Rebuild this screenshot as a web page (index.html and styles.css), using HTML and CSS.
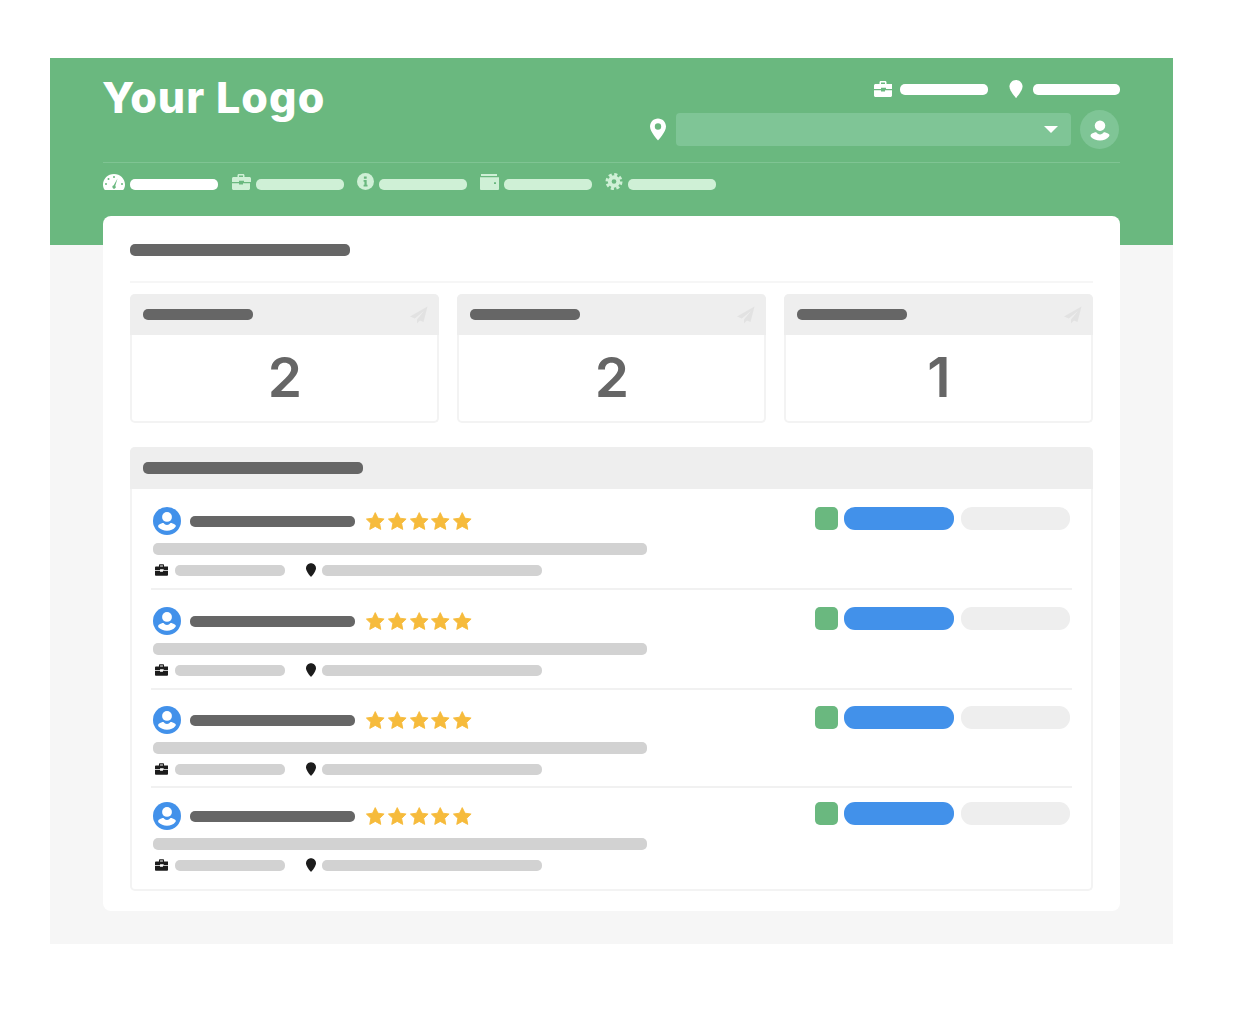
FILE: index.html
```html
<!DOCTYPE html>
<html lang="en">
<head>
    <meta charset="UTF-8">
    <meta name="viewport" content="width=device-width, initial-scale=1.0">
    <title>Your Logo</title>
    <link rel="stylesheet" href="styles.css">
</head>
<body>
    <svg class="icon-defs" aria-hidden="true">
        <symbol id="i-case" viewBox="0 0 18 16">
            <path fill-rule="evenodd" d="M5.5 3V1.4C5.5.6 6.1 0 6.9 0h4.2c.8 0 1.4.6 1.4 1.4V3h4.9c.9 0 1.6.7 1.6 1.5V8h-7V6.8H7V8H0V4.5C0 3.7.7 3 1.5 3zM7 1.6V3h4V1.6zM0 9.2h7v1.3h4V9.2h7v5.3c0 .8-.7 1.5-1.5 1.5h-15C.7 16 0 15.3 0 14.5z"/>
        </symbol>
        <symbol id="i-pin" viewBox="0 0 16 22">
            <path d="M8 0C3.6 0 0 3.6 0 8c0 5.5 8 14 8 14s8-8.5 8-14c0-4.4-3.6-8-8-8z"/>
        </symbol>
        <symbol id="i-pin-hole" viewBox="0 0 16 22">
            <path fill-rule="evenodd" d="M8 0C3.6 0 0 3.6 0 8c0 5.5 8 14 8 14s8-8.5 8-14c0-4.4-3.6-8-8-8zm0 4.8a3.2 3.2 0 1 1 0 6.4 3.2 3.2 0 0 1 0-6.4z"/>
        </symbol>
        <symbol id="i-user" viewBox="2 2 24 24">
            <circle cx="14" cy="10.5" r="4.2"/>
            <path d="M7 17.2c1.4-.9 2.9-1.4 4-1.4.8 1.1 1.8 1.7 3 1.7s2.200-.6 3-1.700c1.100 0 2.600.5 4 1.400.7.5.7 1.300.2 1.900C19.500 21.300 17 22.300 14 22.300s-5.500-1-7.200-2.700c-.5-.6-.5-1.900.2-2.400z"/>
        </symbol>
        <symbol id="i-plane" viewBox="0 0 18 18">
            <path d="M17.500.5 0 10.500l4.800 2L14 5l-7 8.500v4l3-3 3.500 1.500z"/>
        </symbol>
        <symbol id="i-star" viewBox="-1 -1 22 21">
            <path d="M10 .5l2.900 6 6.600.9-4.800 4.600 1.200 6.500-5.900-3.200L4.100 18.500l1.200-6.500L.5 7.400l6.600-.9z"/>
        </symbol>
    </svg>

    <div class="frame">
        <header class="top">
            <div class="top-row">
                <div class="logo">Your Logo</div>
                <div class="top-right">
                    <div class="links">
                        <svg class="ic-case"><use href="#i-case"/></svg>
                        <span class="bar bar-link"></span>
                        <svg class="ic-pin"><use href="#i-pin"/></svg>
                        <span class="bar bar-link"></span>
                    </div>
                    <div class="search">
                        <svg class="ic-search-pin"><use href="#i-pin-hole"/></svg>
                        <div class="select"><span class="caret"></span></div>
                        <div class="me"><svg class="ic-me"><use href="#i-user"/></svg></div>
                    </div>
                </div>
            </div>
            <nav class="nav">
                <div class="nav-item active">
                    <svg class="ic-gauge" viewBox="0 0 22 16">
                        <path d="M11 0C4.900 0 0 4.700 0 10.500c0 1.900.5 3.600 1.400 5.100.1.200.3.400.6.400h18c.3 0 .5-.2.6-.4.900-1.500 1.400-3.200 1.400-5.100C22 4.700 17.100 0 11 0z"/>
                        <g fill="#6ab87f"><circle cx="11" cy="3" r="1"/><circle cx="5.500" cy="5" r="1"/><circle cx="3" cy="10" r="1"/><circle cx="19" cy="10" r="1"/><path d="M14.500 4.500l-2.200 7.300a1.700 1.700 0 1 1-1.600-.5z"/></g>
                    </svg>
                    <span class="bar"></span>
                </div>
                <div class="nav-item">
                    <svg class="ic-nav-case"><use href="#i-case"/></svg>
                    <span class="bar"></span>
                </div>
                <div class="nav-item">
                    <svg class="ic-info" viewBox="0 0 16 16">
                        <circle cx="8" cy="8" r="8"/>
                        <path fill="#6ab87f" d="M6.500 3.200h2.600v2.200H6.500zM6.200 6.500h2.900v4.600h.8v1.700H6.200v-1.700H7V8.200h-.8z"/>
                    </svg>
                    <span class="bar"></span>
                </div>
                <div class="nav-item">
                    <svg class="ic-wallet" viewBox="0 0 19 16">
                        <path d="M1 0h16v2H1z"/>
                        <path fill-rule="evenodd" d="M0 3.200h19V15a1 1 0 0 1-1 1H1a1 1 0 0 1-1-1zM14 8.200v1.800h2V8.200z"/>
                    </svg>
                    <span class="bar"></span>
                </div>
                <div class="nav-item">
                    <svg class="ic-gear" viewBox="0 0 18 18">
                        <circle class="gear-teeth" cx="9" cy="9" r="7.500"/>
                        <circle class="gear-ring" cx="9" cy="9" r="4.500"/>
                    </svg>
                    <span class="bar"></span>
                </div>
            </nav>
        </header>

        <main class="card">
            <div class="card-title"><span class="bar bar-dark bar-title"></span></div>

            <section class="stats">
                <div class="stat">
                    <div class="stat-head">
                        <span class="bar bar-dark bar-stat"></span>
                        <svg class="ic-plane"><use href="#i-plane"/></svg>
                    </div>
                    <div class="stat-num">2</div>
                </div>
                <div class="stat">
                    <div class="stat-head">
                        <span class="bar bar-dark bar-stat"></span>
                        <svg class="ic-plane"><use href="#i-plane"/></svg>
                    </div>
                    <div class="stat-num">2</div>
                </div>
                <div class="stat">
                    <div class="stat-head">
                        <span class="bar bar-dark bar-stat"></span>
                        <svg class="ic-plane"><use href="#i-plane"/></svg>
                    </div>
                    <div class="stat-num">1</div>
                </div>
            </section>

            <section class="panel">
                <div class="panel-head"><span class="bar bar-dark bar-title"></span></div>

                <div class="row">
                    <div class="row-main">
                        <div class="row-name">
                            <svg class="ic-avatar" viewBox="0 0 28 28"><circle class="avatar-bg" cx="14" cy="14" r="14"/><use href="#i-user" width="28" height="28"/></svg>
                            <span class="bar bar-dark bar-name"></span>
                            <div class="stars">
                                <svg><use href="#i-star"/></svg><svg><use href="#i-star"/></svg><svg><use href="#i-star"/></svg><svg><use href="#i-star"/></svg><svg><use href="#i-star"/></svg>
                            </div>
                        </div>
                        <span class="bar bar-grey bar-desc"></span>
                        <div class="row-meta">
                            <svg class="ic-meta-case"><use href="#i-case"/></svg>
                            <span class="bar bar-grey bar-job"></span>
                            <svg class="ic-meta-pin"><use href="#i-pin"/></svg>
                            <span class="bar bar-grey bar-place"></span>
                        </div>
                    </div>
                    <div class="row-actions"><span class="tag"></span><span class="btn btn-blue"></span><span class="btn btn-grey"></span></div>
                </div>

                <div class="row">
                    <div class="row-main">
                        <div class="row-name">
                            <svg class="ic-avatar" viewBox="0 0 28 28"><circle class="avatar-bg" cx="14" cy="14" r="14"/><use href="#i-user" width="28" height="28"/></svg>
                            <span class="bar bar-dark bar-name"></span>
                            <div class="stars">
                                <svg><use href="#i-star"/></svg><svg><use href="#i-star"/></svg><svg><use href="#i-star"/></svg><svg><use href="#i-star"/></svg><svg><use href="#i-star"/></svg>
                            </div>
                        </div>
                        <span class="bar bar-grey bar-desc"></span>
                        <div class="row-meta">
                            <svg class="ic-meta-case"><use href="#i-case"/></svg>
                            <span class="bar bar-grey bar-job"></span>
                            <svg class="ic-meta-pin"><use href="#i-pin"/></svg>
                            <span class="bar bar-grey bar-place"></span>
                        </div>
                    </div>
                    <div class="row-actions"><span class="tag"></span><span class="btn btn-blue"></span><span class="btn btn-grey"></span></div>
                </div>

                <div class="row">
                    <div class="row-main">
                        <div class="row-name">
                            <svg class="ic-avatar" viewBox="0 0 28 28"><circle class="avatar-bg" cx="14" cy="14" r="14"/><use href="#i-user" width="28" height="28"/></svg>
                            <span class="bar bar-dark bar-name"></span>
                            <div class="stars">
                                <svg><use href="#i-star"/></svg><svg><use href="#i-star"/></svg><svg><use href="#i-star"/></svg><svg><use href="#i-star"/></svg><svg><use href="#i-star"/></svg>
                            </div>
                        </div>
                        <span class="bar bar-grey bar-desc"></span>
                        <div class="row-meta">
                            <svg class="ic-meta-case"><use href="#i-case"/></svg>
                            <span class="bar bar-grey bar-job"></span>
                            <svg class="ic-meta-pin"><use href="#i-pin"/></svg>
                            <span class="bar bar-grey bar-place"></span>
                        </div>
                    </div>
                    <div class="row-actions"><span class="tag"></span><span class="btn btn-blue"></span><span class="btn btn-grey"></span></div>
                </div>

                <div class="row">
                    <div class="row-main">
                        <div class="row-name">
                            <svg class="ic-avatar" viewBox="0 0 28 28"><circle class="avatar-bg" cx="14" cy="14" r="14"/><use href="#i-user" width="28" height="28"/></svg>
                            <span class="bar bar-dark bar-name"></span>
                            <div class="stars">
                                <svg><use href="#i-star"/></svg><svg><use href="#i-star"/></svg><svg><use href="#i-star"/></svg><svg><use href="#i-star"/></svg><svg><use href="#i-star"/></svg>
                            </div>
                        </div>
                        <span class="bar bar-grey bar-desc"></span>
                        <div class="row-meta">
                            <svg class="ic-meta-case"><use href="#i-case"/></svg>
                            <span class="bar bar-grey bar-job"></span>
                            <svg class="ic-meta-pin"><use href="#i-pin"/></svg>
                            <span class="bar bar-grey bar-place"></span>
                        </div>
                    </div>
                    <div class="row-actions"><span class="tag"></span><span class="btn btn-blue"></span><span class="btn btn-grey"></span></div>
                </div>
            </section>
        </main>
    </div>
</body>
</html>
```

FILE: styles.css
```css
* { box-sizing: border-box; }
html, body { height: 1018px; overflow: hidden; }
body {
    margin: 0;
    padding: 58px 69px 0 50px;
    background-color: #fff;
    font-family: Inter, "Liberation Sans", sans-serif;
}
svg { display: block; flex: none; }
.icon-defs { width: 0; height: 0; position: absolute; }

.frame { height: 886px; background-color: #f6f6f6; }

/* green header */
.top { height: 187px; padding: 0 53px; background-color: #6ab87f; }
.top-row {
    display: flex;
    justify-content: space-between;
    height: 105px;
    border-bottom: 1px solid #7fc493;
}
.logo {
    margin-left: -1px;
    padding-top: 13px;
    color: #fff;
    font-size: 43px;
    line-height: 52px;
    font-weight: 800;
    letter-spacing: 1.1px;
}
.top-right { display: flex; flex-direction: column; align-items: flex-end; padding-top: 23px; }
.links { display: flex; align-items: center; height: 16px; fill: #fff; }
.ic-case { width: 18px; height: 16px; margin-right: 8px; }
.ic-pin { width: 14px; height: 18px; margin: 0 10px 0 21px; }
.search { display: flex; align-items: center; margin-top: 13px; margin-right: 1px; }
.ic-search-pin { width: 16px; height: 23px; margin-right: 10px; fill: #fff; }
.select {
    display: flex;
    align-items: center;
    justify-content: flex-end;
    width: 395px;
    height: 33px;
    padding-right: 13px;
    background-color: #7fc596;
    border-radius: 4px;
}
.caret { width: 0; height: 0; border-style: solid; border-width: 7px 7px 0; border-color: #fff transparent transparent; }
.me {
    width: 39px;
    height: 39px;
    margin-left: 9px;
    padding: 4.5px;
    background-color: #7fc596;
    border-radius: 50%;
    fill: #fff;
}
.ic-me { width: 30px; height: 30px; }

.nav { display: flex; gap: 13px; padding-top: 10px; }
.nav-item { display: flex; align-items: flex-end; gap: 5px; fill: #cff0d6; height: 17px; }
.nav-item.active { fill: #fff; }
.nav-item.active .bar { background-color: #fff; }
.ic-gauge { width: 22px; height: 16px; }
.ic-nav-case { width: 20px; height: 16px; }
.ic-info { width: 17px; height: 17px; }
.ic-wallet { width: 19px; height: 16px; }
.ic-gear { width: 18px; height: 17px; }
.gear-teeth { fill: none; stroke: #cff0d6; stroke-width: 3; stroke-dasharray: 3.300 2.590; }
.gear-ring { fill: none; stroke: #cff0d6; stroke-width: 4; }

/* skeleton bars */
.bar { display: block; width: 88px; height: 11px; background-color: #cff0d6; border-radius: 5px; flex: none; }
.bar-link { background-color: #fff; }
.bar-link:last-child { width: 87px; }
.bar-dark { background-color: #666; }
.bar-grey { background-color: #d2d2d2; }
.bar-title { width: 220px; height: 12px; }
.bar-stat { width: 110px; }
.bar-name { width: 165px; }
.bar-desc { width: 494px; height: 12px; margin-top: 8px; }
.bar-job { width: 110px; margin-left: 7px; }
.bar-place { width: 220px; margin-left: 6px; }

/* white card */
.card {
    margin: -29px 53px 0;
    padding: 28px 27px 20px;
    height: 695px;
    background-color: #fff;
    border-radius: 8px;
}
.card-title { padding-bottom: 25px; border-bottom: 2px solid #f6f6f6; }

.stats { display: grid; grid-template-columns: repeat(3, 1fr); gap: 18px; margin-top: 11px; }
.stat { height: 129px; border-radius: 5px; border: 2px solid #f3f3f3; border-top: 0; display: flex; flex-direction: column; }
.stat-head {
    display: flex;
    align-items: center;
    justify-content: space-between;
    height: 41px;
    margin: 0 -2px;
    padding: 0 11px 0 13px;
    background-color: #eee;
    border-radius: 5px 5px 0 0;
    flex: none;
}
.ic-plane { width: 18px; height: 18px; fill: #e2e2e2; }
.stat-num {
    flex: 1;
    text-align: center;
    padding-left: 1px;
    color: #666;
    font-size: 55px;
    line-height: 85px;
    font-weight: 600;
}

.panel { height: 444px; margin-top: 24px; border: 2px solid #f3f3f3; border-top: 0; border-radius: 5px; }
.panel-head { display: flex; align-items: center; height: 42px; margin: 0 -2px; padding-left: 13px; background-color: #eee; border-radius: 5px 5px 0 0; }

.row {
    display: flex;
    justify-content: space-between;
    height: 101px;
    margin: 0 19px;
    padding: 18px 2px 0;
    border-bottom: 2px solid #f1f1f1;
}
.row:nth-child(3) { height: 100px; padding-top: 17px; }
.row:nth-child(4) { height: 98px; padding-top: 16px; }
.row:nth-child(5) { padding-top: 14px; border-bottom: 0; }

.row-name { display: flex; align-items: center; }
.ic-avatar { width: 28px; height: 28px; margin-right: 9px; fill: #fff; }
.avatar-bg { fill: #4291ea; }
.stars { display: flex; gap: 1.25px; margin-left: 10px; fill: #f6bb3c; stroke: #f6bb3c; stroke-width: 1; stroke-linejoin: round; }
.stars svg { width: 20.5px; height: 20px; }
.row-meta { display: flex; align-items: center; margin-top: 8px; fill: #1c1c1c; }
.ic-meta-case { width: 13px; height: 12px; margin-left: 2px; }
.ic-meta-pin { width: 10px; height: 14px; margin-left: 21px; }

.row-actions { display: flex; gap: 6px; align-items: flex-start; }
.tag { width: 23px; height: 23px; background-color: #6ab87f; border-radius: 5px; }
.btn { width: 110px; height: 23px; border-radius: 11px; }
.btn-blue { background-color: #4291ea; }
.btn-grey { width: 109px; margin-left: 1px; background-color: #eee; }
```
